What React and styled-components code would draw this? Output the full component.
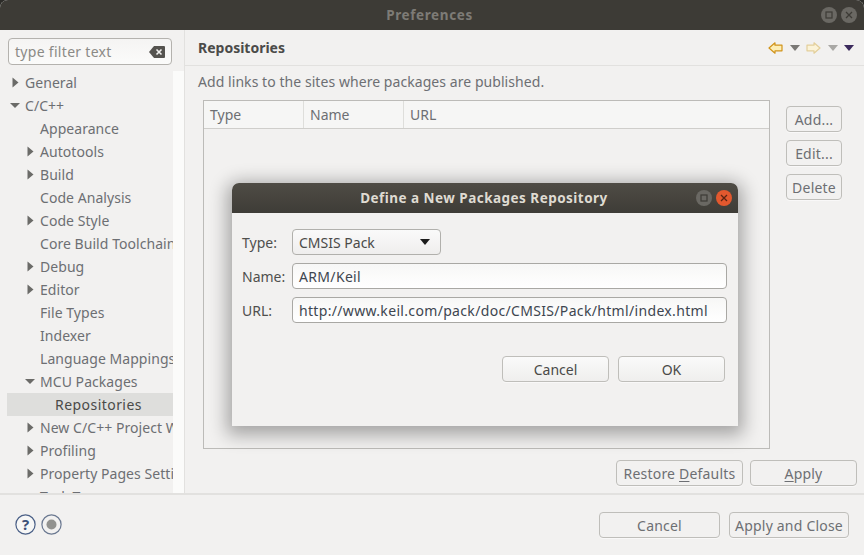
import styled, { createGlobalStyle } from 'styled-components';

const GlobalStyles = createGlobalStyle`
  * {
    box-sizing: border-box;
  }

  html, body {
    margin: 0;
    height: 100%;
    background-color: #2c2b28;
    overflow: hidden;
  }

  body {
    font-family: "Noto Sans", "Open Sans", sans-serif;
    font-size: 14px;
  }
`;

const Window = styled.div`
  position: relative;
  width: 864px;
  height: 555px;
  display: flex;
  flex-direction: column;
  background-color: #f2f1f0;
  border-radius: 8px 8px 0 0;
  overflow: hidden;
`;

const TitleBar = styled.div`
  position: relative;
  flex: none;
  height: 30px;
  display: flex;
  align-items: center;
  justify-content: center;
  padding-right: ${({ small }) => (small ? '2px' : '5px')};
  background: ${({ small }) => (small
    ? 'linear-gradient(#4f4c45, #3e3c37)'
    : '#3d3b36')};
  color: ${({ small }) => (small ? '#dfdbd2' : '#7d7b76')};
  font-weight: bold;
  font-size: 13.5px;
  letter-spacing: ${({ small }) => (small ? '0.47px' : '0.62px')};
`;

const WindowButtons = styled.div`
  position: absolute;
  top: 7px;
  right: ${({ small }) => (small ? '6px' : '7px')};
  display: flex;
  gap: 4px;
`;

const WindowButton = styled.div`
  width: 16px;
  height: 16px;
  border-radius: 50%;
  display: flex;
  align-items: center;
  justify-content: center;
  background: ${({ close }) => (close ? '#e2582e' : '#6a6863')};
`;

const Body = styled.div`
  flex: 1;
  min-height: 0;
  display: flex;
`;

const Sidebar = styled.div`
  width: 185px;
  flex: none;
  display: flex;
  flex-direction: column;
  padding: 8px 0 0 7px;
  border-right: 1px solid #e2e1df;
  background: linear-gradient(90deg, #f2f1f0 7px, transparent 7px),
    linear-gradient(#f2f1f0, #f2f1f0) left top / 100% 41px no-repeat,
    #fbfbfa;
`;

const FilterBox = styled.div`
  width: 164px;
  height: 27px;
  margin-left: 1px;
  padding: 0 6px;
  display: flex;
  align-items: center;
  justify-content: space-between;
  background: linear-gradient(#f5f4f3, #fbfbfa);
  border: 1px solid #b4b2ae;
  border-radius: 4px;
  color: #8b8a86;
  letter-spacing: 0.3px;
`;

const Tree = styled.div`
  margin-top: 6px;
  width: 166px;
  height: 422px;
  background-color: #f2f1f0;
  overflow: hidden;
`;

const TreeRow = styled.div`
  position: relative;
  height: 23px;
  display: flex;
  align-items: center;
  padding-left: ${({ level }) => 18 + level * 15}px;
  white-space: nowrap;
  color: ${({ selected }) => (selected ? '#4a4a48' : '#6d6f73')};
  background-color: ${({ selected }) => (selected ? '#dededc' : 'transparent')};
  letter-spacing: ${({ selected }) => (selected ? '0.45px' : '0.05px')};
`;

const TreeArrow = styled.svg`
  position: absolute;
  left: ${({ level }) => 3 + level * 15}px;
  top: 6px;
  width: 11px;
  height: 11px;
  fill: #6b6b68;
`;

const Content = styled.div`
  flex: 1;
  min-width: 0;
  display: flex;
  flex-direction: column;
`;

const PageHeader = styled.div`
  height: 36px;
  flex: none;
  display: flex;
  align-items: center;
  justify-content: space-between;
  padding: 0 10px 0 13px;
  border-bottom: 1px solid #e2e1df;
`;

const PageTitle = styled.div`
  font-weight: bold;
  color: #4b4b49;
`;

const HeaderTools = styled.div`
  display: flex;
  align-items: center;
  gap: 6.5px;
`;

const Description = styled.div`
  margin: 5px 0 0 13px;
  height: 22px;
  line-height: 22px;
  color: #6d6f73;
  letter-spacing: 0.06px;
`;

const MainRow = styled.div`
  flex: 1;
  min-height: 0;
  display: flex;
  padding: 7px 22px 0 18px;
`;

const Table = styled.div`
  width: 567px;
  height: 349px;
  flex: none;
  border: 1px solid #bcbbb8;
  background-color: #f2f1f0;
`;

const TableHead = styled.div`
  height: 28px;
  display: flex;
  background-color: #f6f6f5;
  border-bottom: 1px solid #cfcecb;
`;

const HeadCell = styled.div`
  width: ${({ wide }) => (wide ? 'auto' : '100px')};
  flex: ${({ wide }) => (wide ? 1 : 'none')};
  padding-left: 6px;
  line-height: 27px;
  color: #6d6f73;
  border-right: ${({ wide }) => (wide ? 'none' : '1px solid #dededb')};
`;

const SideButtons = styled.div`
  margin: 6px 0 0 16px;
  width: 56px;
  display: flex;
  flex-direction: column;
  gap: 8px;
`;

const Button = styled.div`
  height: 26px;
  flex: none;
  width: ${({ width }) => (width ? `${width}px` : 'auto')};
  display: flex;
  align-items: center;
  justify-content: center;
  white-space: nowrap;
  letter-spacing: ${({ strong }) => (strong ? '0' : '0.2px')};
  border: 1px solid #bfbeba;
  border-radius: 4px;
  background: ${({ strong }) => (strong ? 'linear-gradient(#fafafa, #efeeed)' : '#f2f1f0')};
  color: ${({ strong }) => (strong ? '#4a4a48' : '#6d6f73')};
  box-shadow: 0 1px 0 rgba(255, 255, 255, 0.5);

  u {
    text-underline-offset: 2px;
  }
`;

const ActionRow = styled.div`
  flex: none;
  height: 44px;
  padding: 0 7px 7px 0;
  display: flex;
  align-items: flex-end;
  justify-content: flex-end;
  gap: 7px;
`;

const Footer = styled.div`
  flex: none;
  height: 62px;
  display: flex;
  align-items: flex-start;
  justify-content: space-between;
  padding: 17px 15px 0 15px;
  border-top: 2px solid #e2e1df;
`;

const FooterIcons = styled.div`
  display: flex;
  gap: 5px;
  margin-top: 2px;
`;

const FooterButtons = styled.div`
  display: flex;
  gap: 9px;
`;

const DialogShadow = styled.div`
  position: absolute;
  left: 232px;
  top: 183px;
  width: 506px;
  height: 243px;
  border-radius: 7px 7px 0 0;
  box-shadow: 0 4px 18px 5px rgba(0, 0, 0, 0.32);
`;

const Dialog = styled.div`
  position: absolute;
  left: 232px;
  top: 183px;
  width: 506px;
  height: 243px;
  display: flex;
  flex-direction: column;
  background-color: #f2f1f0;
  border-radius: 7px 7px 0 0;
  overflow: hidden;
`;

const Form = styled.div`
  display: grid;
  grid-template-columns: 50px 435px;
  row-gap: 8px;
  padding: 16px 0 0 10px;
  align-items: center;
`;

const FormLabel = styled.div`
  color: #4f4f4d;
`;

const Select = styled.div`
  width: 149px;
  height: 26px;
  padding: 0 10px 0 6px;
  display: flex;
  align-items: center;
  justify-content: space-between;
  background: linear-gradient(#fafafa, #efeeed);
  border: 1px solid #b1b0ac;
  border-radius: 4px;
  color: #4a4a48;
`;

const TextField = styled.div`
  height: 26px;
  padding: 0 6px;
  display: flex;
  align-items: center;
  white-space: nowrap;
  letter-spacing: 0.33px;
  background: linear-gradient(#f7f7f6, #fff);
  border: 1px solid #a9a8a4;
  border-radius: 4px;
  color: #3e4650;
`;

const DialogButtons = styled.div`
  margin-top: 33px;
  padding-right: 13px;
  display: flex;
  justify-content: flex-end;
  gap: 9px;
`;

const tree = [
  { label: 'General', level: 0, arrow: 'right' },
  { label: 'C/C++', level: 0, arrow: 'down' },
  { label: 'Appearance', level: 1 },
  { label: 'Autotools', level: 1, arrow: 'right' },
  { label: 'Build', level: 1, arrow: 'right' },
  { label: 'Code Analysis', level: 1 },
  { label: 'Code Style', level: 1, arrow: 'right' },
  { label: 'Core Build Toolchains', level: 1 },
  { label: 'Debug', level: 1, arrow: 'right' },
  { label: 'Editor', level: 1, arrow: 'right' },
  { label: 'File Types', level: 1 },
  { label: 'Indexer', level: 1 },
  { label: 'Language Mappings', level: 1 },
  { label: 'MCU Packages', level: 1, arrow: 'down' },
  { label: 'Repositories', level: 2, selected: true },
  { label: 'New C/C++ Project Wizard', level: 1, arrow: 'right' },
  { label: 'Profiling', level: 1, arrow: 'right' },
  { label: 'Property Pages Settings', level: 1, arrow: 'right' },
  { label: 'Task Tags', level: 1 },
];

const Triangle = ({ color, size = 10 }) => (
  <svg width={size} height={size * 0.6} viewBox="0 0 10 6">
    <path d="M0 0H10L5 6Z" fill={color} />
  </svg>
);

const NavArrow = ({ flip, fill, stroke }) => (
  <svg width="15" height="12" viewBox="0 0 15 12" style={flip ? { transform: 'scaleX(-1)' } : undefined}>
    <path d="M1 6L7 0.8V3.2H14V8.8H7V11.2Z" fill={fill} stroke={stroke} strokeWidth="1.2" strokeLinejoin="round" />
  </svg>
);

const App = () => (
  <>
    <GlobalStyles />
    <Window>
      <TitleBar>
        Preferences
        <WindowButtons>
          <WindowButton>
            <svg width="8" height="8" viewBox="0 0 8 8"><rect x="1" y="1" width="6" height="6" fill="none" stroke="#3d3b36" strokeWidth="1.2" /></svg>
          </WindowButton>
          <WindowButton>
            <svg width="8" height="8" viewBox="0 0 8 8"><path d="M1 1L7 7M7 1L1 7" stroke="#3d3b36" strokeWidth="1.3" /></svg>
          </WindowButton>
        </WindowButtons>
      </TitleBar>
      <Body>
        <Sidebar>
          <FilterBox>
            type filter text
            <svg width="16" height="12" viewBox="0 0 16 12">
              <path d="M5 0H15a1 1 0 0 1 1 1V11a1 1 0 0 1-1 1H5L0 6Z" fill="#55534f" />
              <path d="M7.5 3.5L12.5 8.5M12.5 3.5L7.5 8.5" stroke="#f2f1f0" strokeWidth="1.6" />
            </svg>
          </FilterBox>
          <Tree>
            {tree.map(({ label, level, arrow, selected }) => (
              <TreeRow key={label} level={level} selected={selected}>
                {arrow && (
                  <TreeArrow level={level} viewBox="0 0 11 11">
                    <path d={arrow === 'right' ? 'M2.5 0.5L8.5 5.5L2.5 10.5Z' : 'M0 3H10L5 8Z'} />
                  </TreeArrow>
                )}
                {label}
              </TreeRow>
            ))}
          </Tree>
        </Sidebar>
        <Content>
          <PageHeader>
            <PageTitle>Repositories</PageTitle>
            <HeaderTools>
              <NavArrow fill="#fdeeb5" stroke="#d1941a" />
              <Triangle color="#7a7875" />
              <NavArrow flip fill="#fbf3d8" stroke="#e3cf9a" />
              <Triangle color="#a9a8a5" />
              <Triangle color="#3b2a5c" />
            </HeaderTools>
          </PageHeader>
          <Description>Add links to the sites where packages are published.</Description>
          <MainRow>
            <Table>
              <TableHead>
                <HeadCell>Type</HeadCell>
                <HeadCell>Name</HeadCell>
                <HeadCell wide>URL</HeadCell>
              </TableHead>
            </Table>
            <SideButtons>
              <Button>Add...</Button>
              <Button>Edit...</Button>
              <Button>Delete</Button>
            </SideButtons>
          </MainRow>
          <ActionRow>
            <Button width={127}><span>Restore <u>D</u>efaults</span></Button>
            <Button width={107}><span><u>A</u>pply</span></Button>
          </ActionRow>
        </Content>
      </Body>
      <Footer>
        <FooterIcons>
          <svg width="21" height="21" viewBox="0 0 21 21">
            <circle cx="10.5" cy="10.5" r="9.6" fill="#f7f7f6" stroke="#4a5f86" strokeWidth="1.2" />
            <text x="10.5" y="16" textAnchor="middle" fontSize="15" fontWeight="bold" fontFamily="Noto Sans" fill="#3d5078">?</text>
          </svg>
          <svg width="21" height="21" viewBox="0 0 21 21">
            <circle cx="10.5" cy="10.5" r="9.6" fill="#f2f1f0" stroke="#6a7890" strokeWidth="1.2" />
            <circle cx="10.5" cy="10.5" r="5" fill="#92928f" />
          </svg>
        </FooterIcons>
        <FooterButtons>
          <Button width={121}>Cancel</Button>
          <Button width={120}>Apply and Close</Button>
        </FooterButtons>
      </Footer>
      <DialogShadow />
      <Dialog>
        <TitleBar small>
          Define a New Packages Repository
          <WindowButtons small>
            <WindowButton>
              <svg width="8" height="8" viewBox="0 0 8 8"><rect x="1" y="1" width="6" height="6" fill="none" stroke="#3d3b36" strokeWidth="1.2" /></svg>
            </WindowButton>
            <WindowButton close>
              <svg width="8" height="8" viewBox="0 0 8 8"><path d="M1 1L7 7M7 1L1 7" stroke="#5a2412" strokeWidth="1.3" /></svg>
            </WindowButton>
          </WindowButtons>
        </TitleBar>
        <Form>
          <FormLabel>Type:</FormLabel>
          <Select>
            CMSIS Pack
            <Triangle color="#1c1c1c" />
          </Select>
          <FormLabel>Name:</FormLabel>
          <TextField>ARM/Keil</TextField>
          <FormLabel>URL:</FormLabel>
          <TextField>http://www.keil.com/pack/doc/CMSIS/Pack/html/index.html</TextField>
        </Form>
        <DialogButtons>
          <Button width={107} strong>Cancel</Button>
          <Button width={107} strong>OK</Button>
        </DialogButtons>
      </Dialog>
    </Window>
  </>
);

export default App;
